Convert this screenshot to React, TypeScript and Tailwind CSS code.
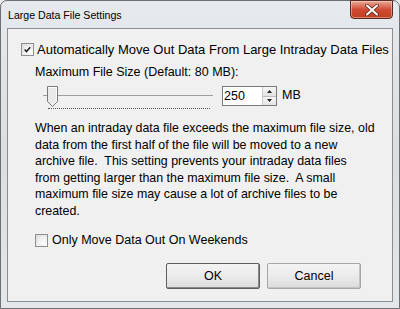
import React from "react";

function Check({ checked }: { checked: boolean }) {
  return (
    <div className="w-[13px] h-[13px] border border-[#8e8f8f] bg-gradient-to-br from-[#dcdcdc] to-[#fcfcfc] p-[2px] shrink-0">
      <div className="w-full h-full bg-gradient-to-br from-[#e8e8e8] to-white flex items-center justify-center">
        {checked && (
          <svg width="8" height="7" viewBox="0 0 8 7">
            <path d="M0.8 3.5 L2.8 5.8 L7.2 0.8" stroke="#1c1c1c" strokeWidth="1.7" fill="none" />
          </svg>
        )}
      </div>
    </div>
  );
}

function Button({ label, isDefault }: { label: string; isDefault?: boolean }) {
  return (
    <div
      className={
        "w-[94px] h-[26px] flex items-center justify-center rounded-[2px] text-[12.5px] text-black border bg-gradient-to-b from-[#f3f3f3] via-[#ebebeb] to-[#dcdcdc] " +
        (isDefault
          ? "border-[#5e5e5e] shadow-[inset_-1px_-1px_0_#8a8a8a]"
          : "border-[#a7a7a7] shadow-[inset_-1px_-1px_0_#c4c4c4]")
      }
    >
      {label}
    </div>
  );
}

export default function App() {
  return (
    <div
      className="w-[400px] h-[309px] overflow-hidden bg-[#e9ebee]"
      style={{ fontFamily: '"Liberation Sans", Arial, sans-serif' }}
    >
      <div className="w-[400px] h-[309px] border border-[#6d6f72] rounded-t-[7px] bg-gradient-to-b from-[#e6e9ed] via-[#dadee3] to-[#e3e6ea] flex flex-col px-[6px] pb-[6px]">
        <div className="h-[27px] shrink-0 flex items-start justify-between">
          <div className="pt-[7px] pl-[1px] text-[10.6px] text-black leading-[14px]">
            Large Data File Settings
          </div>
          <div className="w-[43px] h-[19px] -mt-[1px] rounded-b-[4px] border border-[#5a2a20] bg-gradient-to-b from-[#e9a898] via-[#cf4b33] to-[#c1401f] flex items-center justify-center shadow-[inset_0_0_0_1px_rgba(255,255,255,0.35)]">
            <svg width="14" height="12" viewBox="0 0 14 12">
              <path d="M2 1.5 L12 10.5 M12 1.5 L2 10.5" stroke="#5b2a20" strokeWidth="3.6" strokeLinecap="round" />
              <path d="M2 1.5 L12 10.5 M12 1.5 L2 10.5" stroke="#ffffff" strokeWidth="2" strokeLinecap="round" />
            </svg>
          </div>
        </div>
        <div className="flex-1 border border-[#8b8d90] bg-[#f0f0f0] flex flex-col text-[12.5px] text-black">
          <div className="flex items-center gap-[3px] pl-[13px] mt-[13px] h-[15px] leading-[15px] whitespace-nowrap">
            <Check checked />
            <span className="text-[13px]">Automatically Move Out Data From Large Intraday Data Files</span>
          </div>
          <div className="pl-[27px] mt-[8px] h-[15px] leading-[15px] whitespace-nowrap">
            Maximum File Size (Default: 80 MB):
          </div>
          <div className="flex items-start pl-[35px] mt-[6px] h-[24px]">
            <div className="relative w-[170px] h-[24px]">
              <div className="absolute left-[0px] top-[9px] w-[5px] h-[1px] bg-[#a0a0a0]" />
              <div className="absolute left-[15px] right-[0px] top-[9px] h-[1px] bg-[#9d9d9d]" />
              <div className="absolute left-[5px] right-[3px] top-[22px] h-[1px] border-t border-dotted border-[#555]" />
              <svg className="absolute left-[4px] top-[0px]" width="12" height="22" viewBox="0 0 12 22">
                <path d="M0.5 0.5 H10.5 V15.5 L5.5 20.5 L0.5 15.5 Z" fill="#eaeaea" stroke="#7a7a7a" />
                <path d="M1.5 1.5 H9.5 V15 L5.5 19" fill="none" stroke="#ffffff" />
              </svg>
            </div>
            <div className="ml-[9px] w-[55px] h-[20px] border border-[#7a7a7a] bg-white flex">
              <div className="flex-1 pl-[1px] leading-[18px]">250</div>
              <div className="w-[14px] h-full flex flex-col border-l border-[#c8c8c8]">
                <div className="flex-1 bg-gradient-to-b from-[#f6f6f6] to-[#e3e3e3] border-b border-[#bcbcbc] flex items-center justify-center">
                  <svg width="5" height="3" viewBox="0 0 5 3"><path d="M0 3 L2.5 0 L5 3 Z" fill="#222" /></svg>
                </div>
                <div className="flex-1 bg-gradient-to-b from-[#f6f6f6] to-[#e3e3e3] flex items-center justify-center">
                  <svg width="5" height="3" viewBox="0 0 5 3"><path d="M0 0 L2.5 3 L5 0 Z" fill="#222" /></svg>
                </div>
              </div>
            </div>
            <div className="ml-[5px] mt-[2px] leading-[15px]">MB</div>
          </div>
          <div className="pl-[27px] mt-[10px] text-[12.4px] leading-[16.5px] whitespace-nowrap">
            <div>When an intraday data file exceeds the maximum file size, old</div>
            <div>data from the first half of the file will be moved to a new</div>
            <div>archive file.&nbsp; This setting prevents your intraday data files</div>
            <div>from getting larger than the maximum file size.&nbsp; A small</div>
            <div>maximum file size may cause a lot of archive files to be</div>
            <div>created.</div>
          </div>
          <div className="flex items-center gap-[4px] pl-[27px] mt-[14px] h-[15px] leading-[15px] whitespace-nowrap">
            <Check checked={false} />
            <span>Only Move Data Out On Weekends</span>
          </div>
          <div className="flex justify-end gap-[7px] pr-[31px] mt-[15px]">
            <Button label="OK" isDefault />
            <Button label="Cancel" />
          </div>
        </div>
      </div>
    </div>
  );
}
